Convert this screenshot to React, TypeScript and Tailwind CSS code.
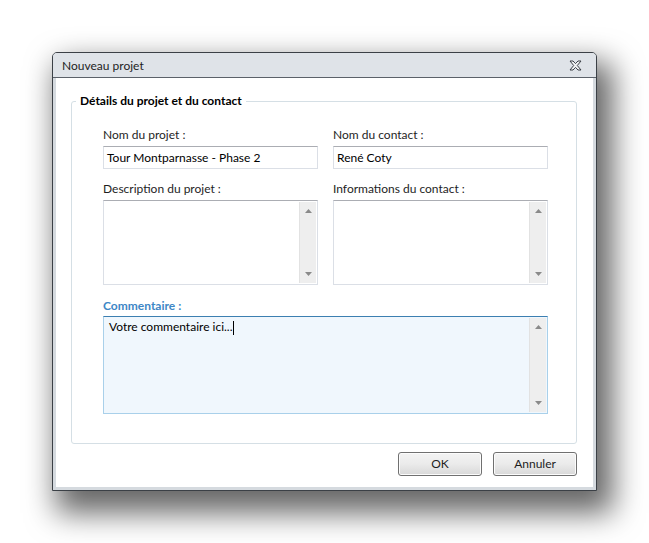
import React from 'react';

const font = { fontFamily: '"Lato", "Open Sans", sans-serif' };

const ScrollBar = () => (
  <div className="w-[17px] my-px mr-px bg-[#eeeeee] border-l border-[#e2e2e2] flex flex-col justify-between items-center py-[7px]">
    <svg width="7" height="4" viewBox="0 0 7 4"><path d="M3.5 0L7 4H0z" fill="#8a8a8a" /></svg>
    <svg width="7" height="4" viewBox="0 0 7 4"><path d="M0 0h7L3.5 4z" fill="#8a8a8a" /></svg>
  </div>
);

const TextBox = ({ value }: { value: string }) => (
  <div className="h-[23px] border border-[#dbdfe6] border-t-[#abadb3] bg-white flex items-center px-[3px] text-[12px] text-black">
    {value}
  </div>
);

const TextArea = () => (
  <div className="h-[85px] border border-[#dbdfe6] border-t-[#abadb3] bg-white flex justify-end">
    <ScrollBar />
  </div>
);

const Label = ({ children }: { children: React.ReactNode }) => (
  <div className="text-[12px] leading-[16px] text-[#1e1e1e] mb-[3px]">{children}</div>
);

const Button = ({ children }: { children: React.ReactNode }) => (
  <button className="w-[84px] h-[24px] rounded-[3px] border border-[#707070] bg-gradient-to-b from-[#f3f3f3] via-[#ebebeb] to-[#d8d8d8] text-[12px] text-[#1e1e1e] shadow-[inset_0_0_0_1px_#fcfcfc]">
    {children}
  </button>
);

export default function App() {
  return (
    <div className="min-h-[543px] bg-white pt-[52px] pl-[52px]" style={font}>
      <div className="w-[545px] h-[439px] flex flex-col rounded-t-[5px] border border-[#3b4046] bg-[#d5dadf] shadow-[10px_16px_30px_6px_rgba(0,0,0,0.6)]">
        {/* title bar */}
        <div className="h-[25px] flex items-center justify-between pl-[9px] pr-[14px] bg-[#dfe3e8] rounded-t-[4px] border-b border-[#5b6169]">
          <span className="text-[12px] text-[#1e1e1e] pt-[2px]">Nouveau projet</span>
          <svg width="13" height="11" viewBox="0 0 13 11">
            <path
              d="M1 1h3l2.5 2.6L9 1h3L8.3 5.5 12 10H9L6.5 7.4 4 10H1l3.7-4.5z"
              fill="#f4f5f6"
              stroke="#3a3f45"
              strokeWidth="1"
              strokeLinejoin="round"
            />
          </svg>
        </div>

        {/* body */}
        <div className="flex-1 mx-[3px] mb-[3px] bg-white flex flex-col pl-[15px] pr-[16px] pt-[14px]">
          <fieldset className="h-[352px] border border-[#d5dfe5] rounded-[3px] pl-[31px] pr-[28px] pt-[17px]">
            <legend className="ml-[-27px] px-[4px] text-[12px] font-bold text-black">Détails du projet et du contact</legend>

            <div className="grid grid-cols-2 gap-x-[15px]">
              <div>
                <Label>Nom du projet :</Label>
                <TextBox value="Tour Montparnasse - Phase 2" />
              </div>
              <div>
                <Label>Nom du contact :</Label>
                <TextBox value="René Coty" />
              </div>
              <div className="mt-[12px]">
                <Label>Description du projet :</Label>
                <TextArea />
              </div>
              <div className="mt-[12px]">
                <Label>Informations du contact :</Label>
                <TextArea />
              </div>
            </div>

            <div className="mt-[13px]">
              <div className="text-[12px] leading-[16px] font-bold text-[#3d87c6] mb-[2px]">Commentaire :</div>
              <div className="h-[98px] border border-[#a9d0ea] border-t-[#3c7fb1] bg-[#f0f7fd] flex">
                <div className="flex-1 px-[5px] pt-[2px] text-[12px] leading-[16px] text-black">
                  Votre commentaire ici...
                  <span className="inline-block w-px h-[14px] bg-black align-middle" />
                </div>
                <ScrollBar />
              </div>
            </div>
          </fieldset>

          <div className="flex justify-end gap-[11px] mt-[8px]">
            <Button>OK</Button>
            <Button>Annuler</Button>
          </div>
        </div>
      </div>
    </div>
  );
}
